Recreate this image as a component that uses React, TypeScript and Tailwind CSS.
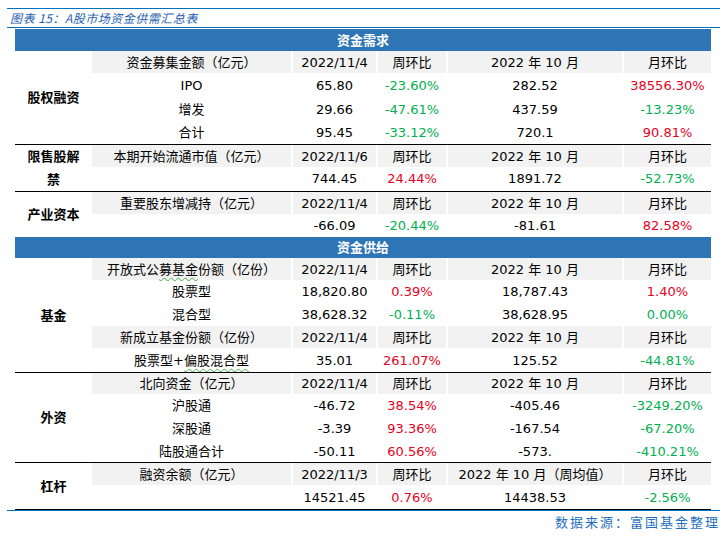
import type { ReactNode } from 'react';

const FONT = "font-['DejaVu_Sans','Noto_Sans_CJK_SC',sans-serif]";

const pctColor = (s: string) =>
  s.startsWith('-') || s === '0.00%' ? 'text-[#00b050]' : 'text-[#e8001c]';

const Squiggle = ({ children }: { children: ReactNode }) => (
  <span className="underline decoration-wavy decoration-[#4caf50] decoration-1 underline-offset-[3px]">
    {children}
  </span>
);

const HeadRow = ({
  label,
  date,
  month = '2022 年 10 月',
  h = 'h-[22px]',
}: {
  label: ReactNode;
  date: string;
  month?: string;
  h?: string;
}) => {
  const cell = 'flex items-center justify-center bg-[#f2f2f2] whitespace-nowrap';
  return (
    <div className={`grid grid-cols-[199px_83px_68px_174px_87px] gap-x-[2px] ${h}`}>
      <div className={cell}>{label}</div>
      <div className={cell}>{date}</div>
      <div className={cell}>周环比</div>
      <div className={cell}>{month}</div>
      <div className={cell}>月环比</div>
    </div>
  );
};

const DataRow = ({
  label = '',
  v,
  w,
  m,
  mm,
  h = 'h-[23px]',
}: {
  label?: ReactNode;
  v: string;
  w: string;
  m: string;
  mm: string;
  h?: string;
}) => {
  const cell = 'flex items-center justify-center whitespace-nowrap';
  return (
    <div className={`grid grid-cols-[199px_83px_68px_174px_87px] gap-x-[2px] ${h}`}>
      <div className={cell}>{label}</div>
      <div className={cell}>{v}</div>
      <div className={`${cell} ${pctColor(w)}`}>{w}</div>
      <div className={cell}>{m}</div>
      <div className={`${cell} ${pctColor(mm)}`}>{mm}</div>
    </div>
  );
};

const Section = ({
  cat,
  top = true,
  bottom = false,
  children,
}: {
  cat: ReactNode;
  top?: boolean;
  bottom?: boolean;
  children: ReactNode;
}) => (
  <div
    className={`flex ${top ? 'border-t border-black' : ''} ${bottom ? 'border-b border-black' : ''}`}
  >
    <div className="w-[77px] flex items-center justify-center font-bold text-center">{cat}</div>
    <div className="w-[619px] flex flex-col">{children}</div>
  </div>
);

const BlueBar = ({ title, h }: { title: string; h: string }) => (
  <div className={`${h} bg-[#2e75b6] text-white font-bold flex items-center justify-center`}>
    {title}
  </div>
);

export default function App() {
  return (
    <div className={`w-[723px] h-[537px] bg-white pt-[8px] text-black ${FONT}`}>
      <div className="ml-[7px] w-[713px] h-px bg-[#0070c0]" />
      <div className="ml-[7px] h-[18px] flex items-center pl-[3px] text-[12px] italic tracking-[0.5px] text-[#1f5fb0] font-['Noto_Sans_CJK_SC',sans-serif]">
        图表 15：A股市场资金供需汇总表
      </div>
      <div className="ml-[7px] w-[713px] h-px bg-[#0070c0]" />

      <div className="ml-[15px] w-[696px] mt-px text-[13px] leading-none">
        <BlueBar title="资金需求" h="h-[22px]" />

        <Section cat="股权融资" top={false}>
          <HeadRow label="资金募集金额（亿元）" date="2022/11/4" />
          <DataRow label="IPO" v="65.80" w="-23.60%" m="282.52" mm="38556.30%" h="h-[24px]" />
          <DataRow label="增发" v="29.66" w="-47.61%" m="437.59" mm="-13.23%" h="h-[24px]" />
          <DataRow label="合计" v="95.45" w="-33.12%" m="720.1" mm="90.81%" h="h-[23px]" />
        </Section>

        <Section cat={<span className="leading-[23px]">限售股解<br />禁</span>}>
          <HeadRow label="本期开始流通市值（亿元）" date="2022/11/6" />
          <DataRow v="744.45" w="24.44%" m="1891.72" mm="-52.73%" h="h-[22px]" />
        </Section>

        <Section cat="产业资本">
          <HeadRow label="重要股东增减持（亿元）" date="2022/11/4" />
          <DataRow v="-66.09" w="-20.44%" m="-81.61" mm="82.58%" h="h-[23px]" />
        </Section>

        <BlueBar title="资金供给" h="h-[21px]" />

        <Section cat="基金" top={false}>
          <HeadRow
            label={
              <span>
                开放式公<Squiggle>募基金</Squiggle>份额（亿份）
              </span>
            }
            date="2022/11/4"
          />
          <DataRow label="股票型" v="18,820.80" w="0.39%" m="18,787.43" mm="1.40%" />
          <DataRow label="混合型" v="38,628.32" w="-0.11%" m="38,628.95" mm="0.00%" />
          <HeadRow label="新成立基金份额（亿份）" date="2022/11/4" />
          <DataRow
            label={
              <span>
                股票型+<Squiggle>偏股混合型</Squiggle>
              </span>
            }
            v="35.01"
            w="261.07%"
            m="125.52"
            mm="-44.81%"
            h="h-[24px]"
          />
        </Section>

        <Section cat="外资">
          <HeadRow label="北向资金（亿元）" date="2022/11/4" h="h-[21px]" />
          <DataRow label="沪股通" v="-46.72" w="38.54%" m="-405.46" mm="-3249.20%" />
          <DataRow label="深股通" v="-3.39" w="93.36%" m="-167.54" mm="-67.20%" />
          <DataRow label="陆股通合计" v="-50.11" w="60.56%" m="-573." mm="-410.21%" h="h-[22px]" />
        </Section>

        <Section cat="杠杆" bottom>
          <HeadRow label="融资余额（亿元）" date="2022/11/3" month="2022 年 10 月（周均值）" />
          <DataRow v="14521.45" w="0.76%" m="14438.53" mm="-2.56%" h="h-[24px]" />
        </Section>
      </div>

      <div className="ml-[7px] w-[713px] h-px bg-[#0070c0]" />
      <div className="w-[720px] h-[22px] flex items-center justify-end text-[13px] tracking-[2px] text-[#1f6fc0] font-['Noto_Sans_CJK_SC',sans-serif]">
        数据来源：富国基金整理
      </div>
    </div>
  );
}
